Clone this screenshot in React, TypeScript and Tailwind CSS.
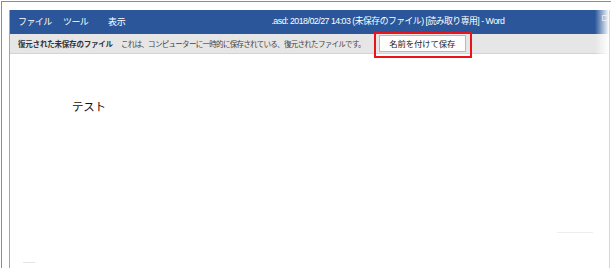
const jp = "font-['Meiryo_UI','Noto_Sans_CJK_JP',sans-serif]";

export default function App() {
  return (
    <div className={`w-[611px] h-[268px] bg-white overflow-hidden pt-px pl-px ${jp}`}>
      <div className="h-[280px] border-t border-l border-[#8c8c8c] pt-[8px] pl-[7px]">
        <div className="relative w-[601px] h-[270px] border-l border-r border-l-[#8fa8d8] border-r-[#d6d6d6] bg-white">
          {/* title bar */}
          <div className="h-[24px] bg-[#2b579a] flex items-center text-white text-[9px] pl-[8px]">
            <span className="w-[45px] tracking-[-0.6px]">ファイル</span>
            <span className="w-[45px] tracking-[-0.6px]">ツール</span>
            <span className="tracking-[-0.3px]">表示</span>
            <span className="ml-[146px] tracking-[-0.5px] font-['Liberation_Sans','Noto_Sans_CJK_JP',sans-serif] text-[8.8px]">
              .asd: 2018/02/27 14:03 (未保存のファイル) [読み取り専用] - Word
            </span>
          </div>

          {/* info bar */}
          <div className="h-[20px] bg-[#e6e6e6] border-b border-[#d4d4d4] flex items-center pl-[8px] text-[#444] text-[7.5px]">
            <span className="font-bold text-[#333] tracking-[-0.2px]">復元された未保存のファイル</span>
            <span className="ml-[8px] tracking-[-0.7px]">
              これは、コンピューターに一時的に保存されている、復元されたファイルです。
            </span>
            <button className="ml-[14px] h-[17px] w-[87px] bg-[#fdfdfd] border border-[#b9b9b9] text-[8.4px] text-[#222] tracking-[-0.1px] leading-none">
              名前を付けて保存
            </button>
          </div>

          {/* highlight */}
          <div className="absolute left-[364px] top-[22px] w-[98px] h-[26px] border-2 border-[#e8141a]" />

          {/* right fade */}
          <div className="absolute right-0 top-0 w-[14px] h-[44px] bg-[linear-gradient(to_right,rgba(255,255,255,0),#fff)]" />
          <div className="absolute right-[2px] top-[5px] w-[5px] h-[6px] border border-white/60 border-r-0" />

          {/* document */}
          <div className="pt-[44px] pl-[62px] text-[11.5px] text-[#111] tracking-[-0.3px]">テスト</div>

          <div className="absolute left-[547px] top-[222px] w-[36px] h-px bg-[#eeeeee]" />
          <div className="absolute left-[13px] top-[252px] w-[12px] h-px bg-[#e4e4e4]" />
        </div>
      </div>
    </div>
  );
}
